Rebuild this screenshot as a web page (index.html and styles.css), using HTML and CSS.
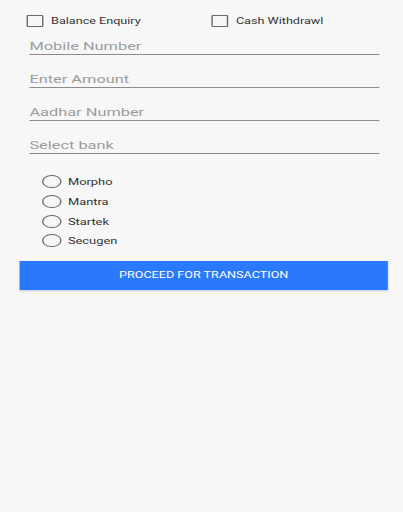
FILE: index.html
```html
<!DOCTYPE html>
<html lang="en">
<head>
  <meta charset="UTF-8" />
  <meta name="viewport" content="width=device-width, initial-scale=1.0" />
  <title>AEPS Transaction</title>
  <link rel="stylesheet" href="styles.css">
</head>
<body>
  <div class="screen">
    <div class="checks">
      <label class="check check-first"><span class="box"></span>Balance Enquiry</label>
      <label class="check"><span class="box"></span>Cash Withdrawl</label>
    </div>

    <div class="field">Mobile Number</div>
    <div class="field">Enter Amount</div>
    <div class="field">Aadhar Number</div>
    <div class="field">Select bank</div>

    <div class="radios">
      <div class="radio"><span class="circle"></span>Morpho</div>
      <div class="radio"><span class="circle"></span>Mantra</div>
      <div class="radio"><span class="circle"></span>Startek</div>
      <div class="radio"><span class="circle"></span>Secugen</div>
    </div>

    <button class="proceed">PROCEED FOR TRANSACTION</button>
  </div>
</body>
</html>
```

FILE: styles.css
```css
:root {
  --bg: #f7f7f7;
  --text: #333333;
  --hint: #9c9c9c;
  --line: #8c8c8c;
  --control: #6a6a6a;
  --primary: #2a78fb;
}

* {
  margin: 0;
  padding: 0;
  box-sizing: border-box;
  font-family: Roboto, sans-serif;
}

html, body {
  background: var(--bg);
  height: 100%;
}

/* the screenshot is stretched sideways, so lay out narrow and widen */
.screen {
  width: 288px;
  padding-top: 12px;
  transform: scaleX(1.4);
  transform-origin: 0 0;
}

.checks {
  display: flex;
  height: 18px;
  align-items: center;
  padding-left: 19px;
}

.check {
  display: flex;
  align-items: center;
  gap: 6px;
  font-size: 9px;
  color: var(--text);
}

.check-first {
  width: 132px;
}

.box {
  width: 11.5px;
  height: 11.5px;
  border: 1.5px solid var(--control);
  border-radius: 1px;
}

.field {
  height: 25px;
  margin: 8px 17px 0 21px;
  padding-bottom: 1px;
  display: flex;
  align-items: flex-end;
  font-size: 11.7px;
  line-height: 14px;
  color: var(--hint);
  border-bottom: 1px solid var(--line);
}

.checks + .field {
  margin-top: 0;
}

.radios {
  margin-top: 18px;
  padding-left: 30px;
}

.radio {
  height: 19.7px;
  display: flex;
  align-items: center;
  gap: 5px;
  font-size: 9.2px;
  color: var(--text);
}

.circle {
  width: 13.5px;
  height: 13px;
  border: 1.5px solid var(--control);
  border-radius: 50%;
}

.proceed {
  display: block;
  width: 263px;
  height: 29px;
  margin: 10px 0 0 14px;
  border: none;
  background: var(--primary);
  color: #ffffff;
  font-size: 9px;
  box-shadow: 0 1px 2px rgba(0, 0, 0, 0.2);
}
```
